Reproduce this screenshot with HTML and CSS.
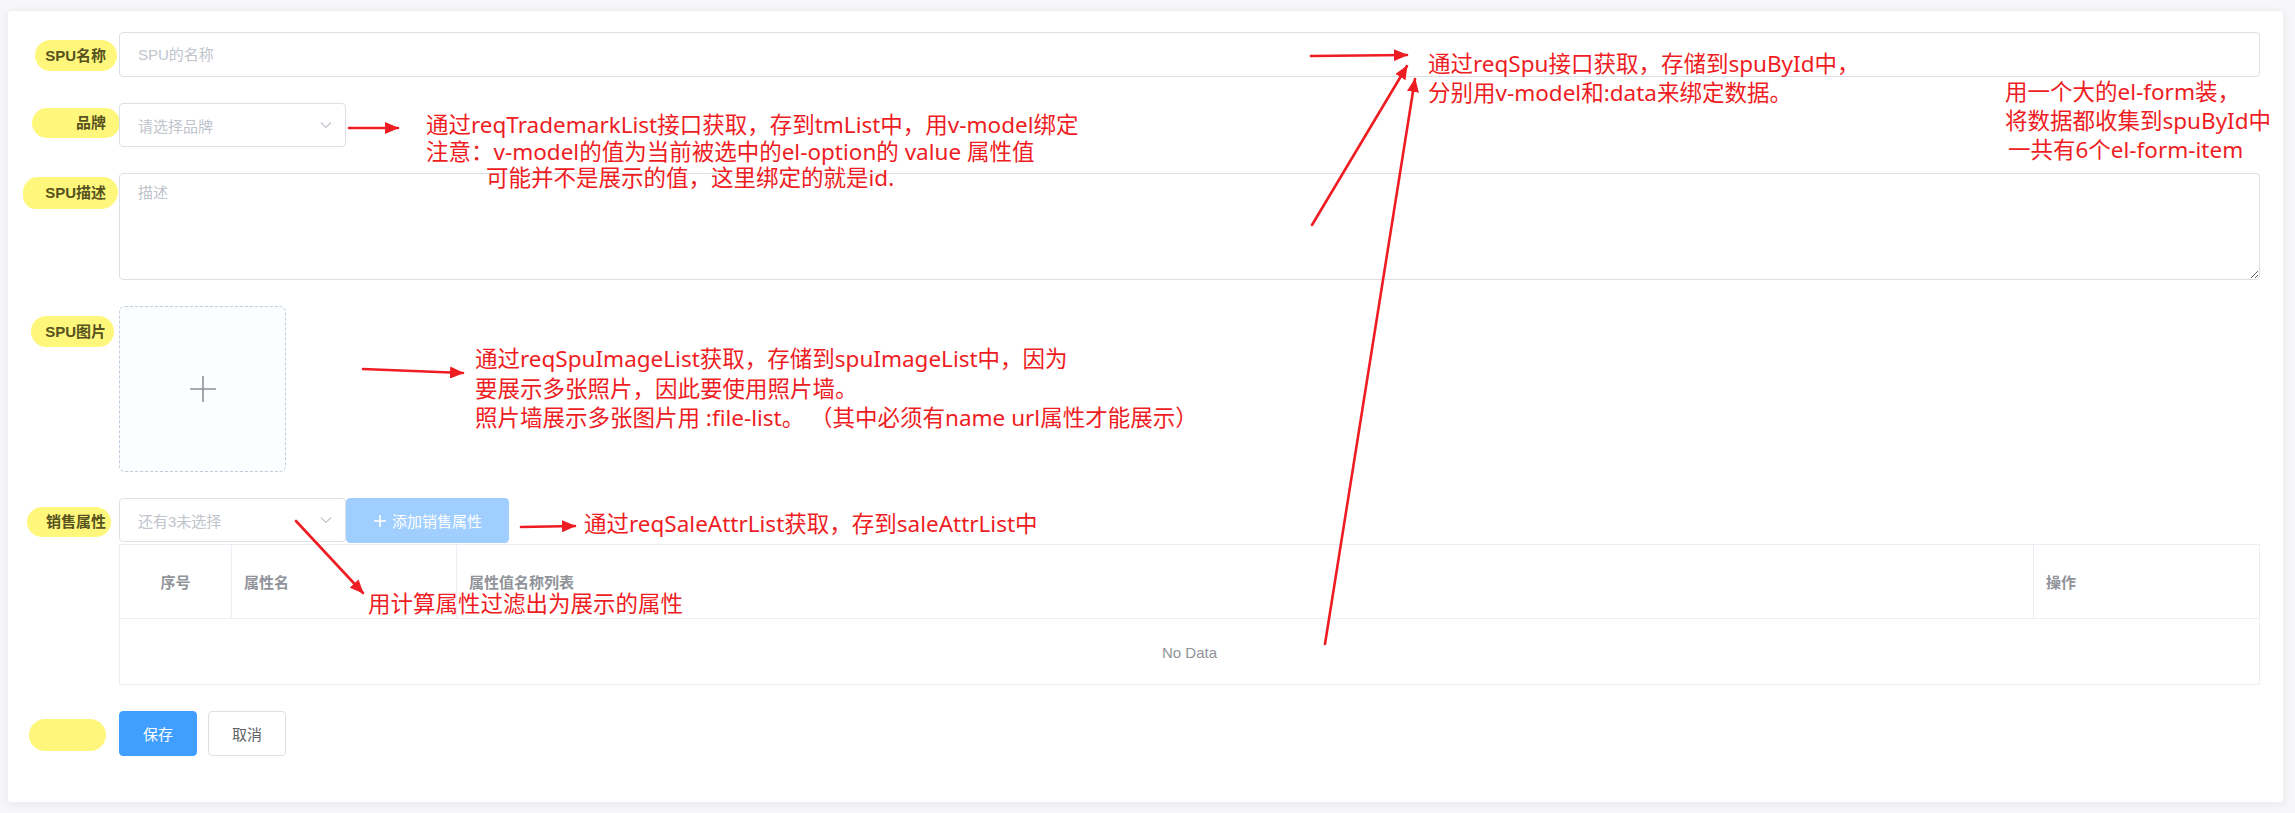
FILE: index.html
```html
<!DOCTYPE html>
<html lang="zh-CN">
<head>
<meta charset="utf-8">
<title>SPU</title>
<link rel="stylesheet" href="styles.css">
</head>
<body>
<div class="page">
  <form class="card">
    <div class="item">
      <div class="label-cell"><span class="mark mark-1">SPU名称</span></div>
      <div class="control"><input class="input" type="text" placeholder="SPU的名称"></div>
    </div>
    <div class="item">
      <div class="label-cell"><span class="mark mark-2">品牌</span></div>
      <div class="control">
        <div class="select">
          <span class="placeholder">请选择品牌</span>
          <svg class="chevron" width="12" height="8" viewBox="0 0 12 8"><path d="M1 1.5 L6 6.5 L11 1.5" fill="none" stroke="#c0c4cc" stroke-width="1.2"/></svg>
        </div>
      </div>
    </div>
    <div class="item">
      <div class="label-cell"><span class="mark mark-3">SPU描述</span></div>
      <div class="control"><textarea class="textarea" placeholder="描述"></textarea></div>
    </div>
    <div class="item">
      <div class="label-cell"><span class="mark mark-4">SPU图片</span></div>
      <div class="control">
        <div class="upload">
          <svg width="28" height="28" viewBox="0 0 28 28"><path d="M14 1 V27 M1 14 H27" stroke="#8c939d" stroke-width="1.6" fill="none"/></svg>
        </div>
      </div>
    </div>
    <div class="item">
      <div class="label-cell"><span class="mark mark-5">销售属性</span></div>
      <div class="control column">
        <div class="sale-bar">
          <div class="select select-sale">
            <span class="placeholder">还有3未选择</span>
            <svg class="chevron" width="12" height="8" viewBox="0 0 12 8"><path d="M1 1.5 L6 6.5 L11 1.5" fill="none" stroke="#c0c4cc" stroke-width="1.2"/></svg>
          </div>
          <button type="button" class="btn btn-light">
            <svg width="14" height="14" viewBox="0 0 14 14"><path d="M7 1 V13 M1 7 H13" stroke="#fff" stroke-width="1.6" fill="none"/></svg>
            <span>添加销售属性</span>
          </button>
        </div>
        <div class="table">
          <div class="thead">
            <div class="th th-center">序号</div>
            <div class="th">属性名</div>
            <div class="th">属性值名称列表</div>
            <div class="th th-last">操作</div>
          </div>
          <div class="tbody">No Data</div>
        </div>
      </div>
    </div>
    <div class="item item-last">
      <div class="label-cell"><span class="mark mark-6"></span></div>
      <div class="control">
        <button type="button" class="btn btn-primary">保存</button>
        <button type="button" class="btn btn-default">取消</button>
      </div>
    </div>
  </form>

  <svg class="arrows" width="2295" height="813" viewBox="0 0 2295 813">
    <defs>
      <marker id="head" markerUnits="userSpaceOnUse" markerWidth="14" markerHeight="12" refX="13" refY="6" orient="auto">
        <path d="M0 0 L14 6 L0 12 Z" fill="#ee1d23"/>
      </marker>
    </defs>
    <g stroke="#ee1d23" stroke-width="2.6" fill="none" stroke-linecap="round" marker-end="url(#head)">
      <line x1="349" y1="128" x2="398" y2="128"/>
      <line x1="363" y1="369" x2="463" y2="373"/>
      <line x1="521" y1="527" x2="575" y2="526"/>
      <line x1="296" y1="521" x2="363" y2="593"/>
      <line x1="1311" y1="56" x2="1407" y2="55"/>
      <line x1="1312" y1="225" x2="1407" y2="66"/>
      <line x1="1325" y1="644" x2="1415" y2="79"/>
    </g>
  </svg>

  <div class="note note-a">
    <div>通过reqTrademarkList接口获取，存到tmList中，用v-model绑定</div>
    <div>注意：v-model的值为当前被选中的el-option的 value 属性值</div>
    <div class="indent">可能并不是展示的值，这里绑定的就是id.</div>
  </div>
  <div class="note note-b">
    <div>通过reqSpuImageList获取，存储到spuImageList中，因为</div>
    <div>要展示多张照片，因此要使用照片墙。</div>
    <div>照片墙展示多张图片用 :file-list。 （其中必须有name url属性才能展示）</div>
  </div>
  <div class="note note-c">通过reqSaleAttrList获取，存到saleAttrList中</div>
  <div class="note note-d">用计算属性过滤出为展示的属性</div>
  <div class="note note-e">
    <div>通过reqSpu接口获取，存储到spuById中，</div>
    <div>分别用v-model和:data来绑定数据。</div>
  </div>
  <div class="note note-f">
    <div>用一个大的el-form装，</div>
    <div>将数据都收集到spuById中</div>
    <div class="nudge">一共有6个el-form-item</div>
  </div>
</div>
</body>
</html>
```

FILE: styles.css
```css
* { box-sizing: border-box; }

html, body {
  margin: 0;
  padding: 0;
  background: #f7f7f9;
}

body {
  font-family: "Liberation Sans", "Noto Sans CJK SC", sans-serif;
  font-size: 15px;
  color: #606266;
}

.page {
  position: relative;
  width: 2295px;
  height: 813px;
  padding: 10px 11px 0 7px;
}

.card {
  background: #fff;
  border: 1px solid #eef0f4;
  border-radius: 4px;
  box-shadow: 0 2px 10px rgba(0, 0, 0, 0.06);
  padding: 21px 23px 46px 0;
  height: 793px;
  display: flex;
  flex-direction: column;
  gap: 26px;
  margin: 0;
}

.item {
  display: flex;
  align-items: flex-start;
}

.label-cell {
  width: 111px;
  flex: none;
  display: flex;
  justify-content: flex-end;
}

.mark {
  display: block;
  background: #fff77b;
  border-radius: 16px;
  font-weight: bold;
  color: #57531f;
  text-align: right;
  font-size: 15px;
  white-space: nowrap;
}

.mark-1 { width: 82px; height: 31px; line-height: 31px; margin-top: 8px; margin-right: 2px; padding-right: 11px; }
.mark-2 { width: 88px; height: 30px; line-height: 30px; margin-top: 5px; margin-right: -1px; padding-right: 14px; }
.mark-3 { width: 95px; height: 32px; line-height: 32px; margin-top: 4px; margin-right: 1px; padding-right: 12px; border-radius: 16px 16px 18px 14px; }
.mark-4 { width: 83px; height: 31px; line-height: 31px; margin-top: 10px; margin-right: 5px; padding-right: 8px; }
.mark-5 { width: 84px; height: 30px; line-height: 30px; margin-top: 9px; margin-right: 8px; padding-right: 5px; }
.mark-6 { width: 77px; height: 32px; margin-top: 8px; margin-right: 13px; }

.control {
  flex: 1;
  display: flex;
  align-items: flex-start;
}

.control.column {
  flex-direction: column;
}

.input {
  width: 100%;
  height: 45px;
  border: 1px solid #dcdfe6;
  border-radius: 4px;
  padding: 0 18px;
  font: inherit;
  font-size: 15px;
  color: #606266;
  outline: none;
}

.input::placeholder,
.textarea::placeholder {
  color: #c0c4cc;
}

.select {
  width: 227px;
  height: 44px;
  border: 1px solid #dcdfe6;
  border-radius: 4px;
  display: flex;
  align-items: center;
  justify-content: space-between;
  padding: 0 13px 0 18px;
}

.select-sale {
  width: 227px;
}

.placeholder {
  color: #c0c4cc;
  font-size: 15px;
}

.chevron {
  display: block;
}

.textarea {
  display: block;
  width: 100%;
  height: 107px;
  border: 1px solid #dcdfe6;
  border-radius: 4px;
  padding: 8px 18px;
  font: inherit;
  font-size: 15px;
  line-height: 22px;
  resize: vertical;
  outline: none;
}

.upload {
  width: 167px;
  height: 166px;
  border: 1px dashed #c0ccda;
  border-radius: 6px;
  background: #fbfdff;
  display: flex;
  align-items: center;
  justify-content: center;
}

.sale-bar {
  display: flex;
  align-items: flex-start;
}

.btn {
  height: 45px;
  border-radius: 4px;
  font: inherit;
  font-size: 15px;
  padding: 0;
  display: inline-flex;
  align-items: center;
  justify-content: center;
  cursor: pointer;
}

.btn-light {
  width: 163px;
  background: #a0cfff;
  border: 1px solid #a0cfff;
  color: #fff;
  gap: 5px;
}

.btn-primary {
  width: 78px;
  background: #409eff;
  border: 1px solid #409eff;
  color: #fff;
}

.btn-default {
  width: 78px;
  background: #fff;
  border: 1px solid #dcdfe6;
  color: #606266;
  margin-left: 11px;
}

.table {
  width: 100%;
  margin-top: 1px;
  border: 1px solid #ebeef5;
}

.thead {
  display: grid;
  grid-template-columns: 112px 225px 1577px 1fr;
  height: 74px;
  border-bottom: 1px solid #ebeef5;
}

.th {
  display: flex;
  align-items: center;
  padding-left: 12px;
  border-right: 1px solid #ebeef5;
  color: #909399;
  font-weight: bold;
  font-size: 15px;
}

.th-center {
  justify-content: center;
  padding-left: 0;
}

.th-last {
  border-right: none;
}

.tbody {
  height: 65px;
  display: flex;
  align-items: center;
  justify-content: center;
  color: #909399;
  font-size: 15px;
  padding-top: 1px;
}

.arrows {
  position: absolute;
  left: 0;
  top: 0;
  pointer-events: none;
}

.note {
  position: absolute;
  color: #ee1d23;
  font-family: "Noto Sans", "Noto Sans CJK SC", sans-serif;
  font-size: 22.5px;
  white-space: nowrap;
}

.note-a { left: 426px; top: 112px; line-height: 26.5px; }
.note-a .indent { padding-left: 60px; }
.note-b { left: 475px; top: 344px; line-height: 29.5px; }
.note-c { left: 584px; top: 509px; line-height: 30px; }
.note-d { left: 368px; top: 589px; line-height: 30px; }
.note-e { left: 1428px; top: 49px; line-height: 29px; }
.note-f { left: 2005px; top: 77px; line-height: 29px; }
.note-f .nudge { padding-left: 3px; }
```
